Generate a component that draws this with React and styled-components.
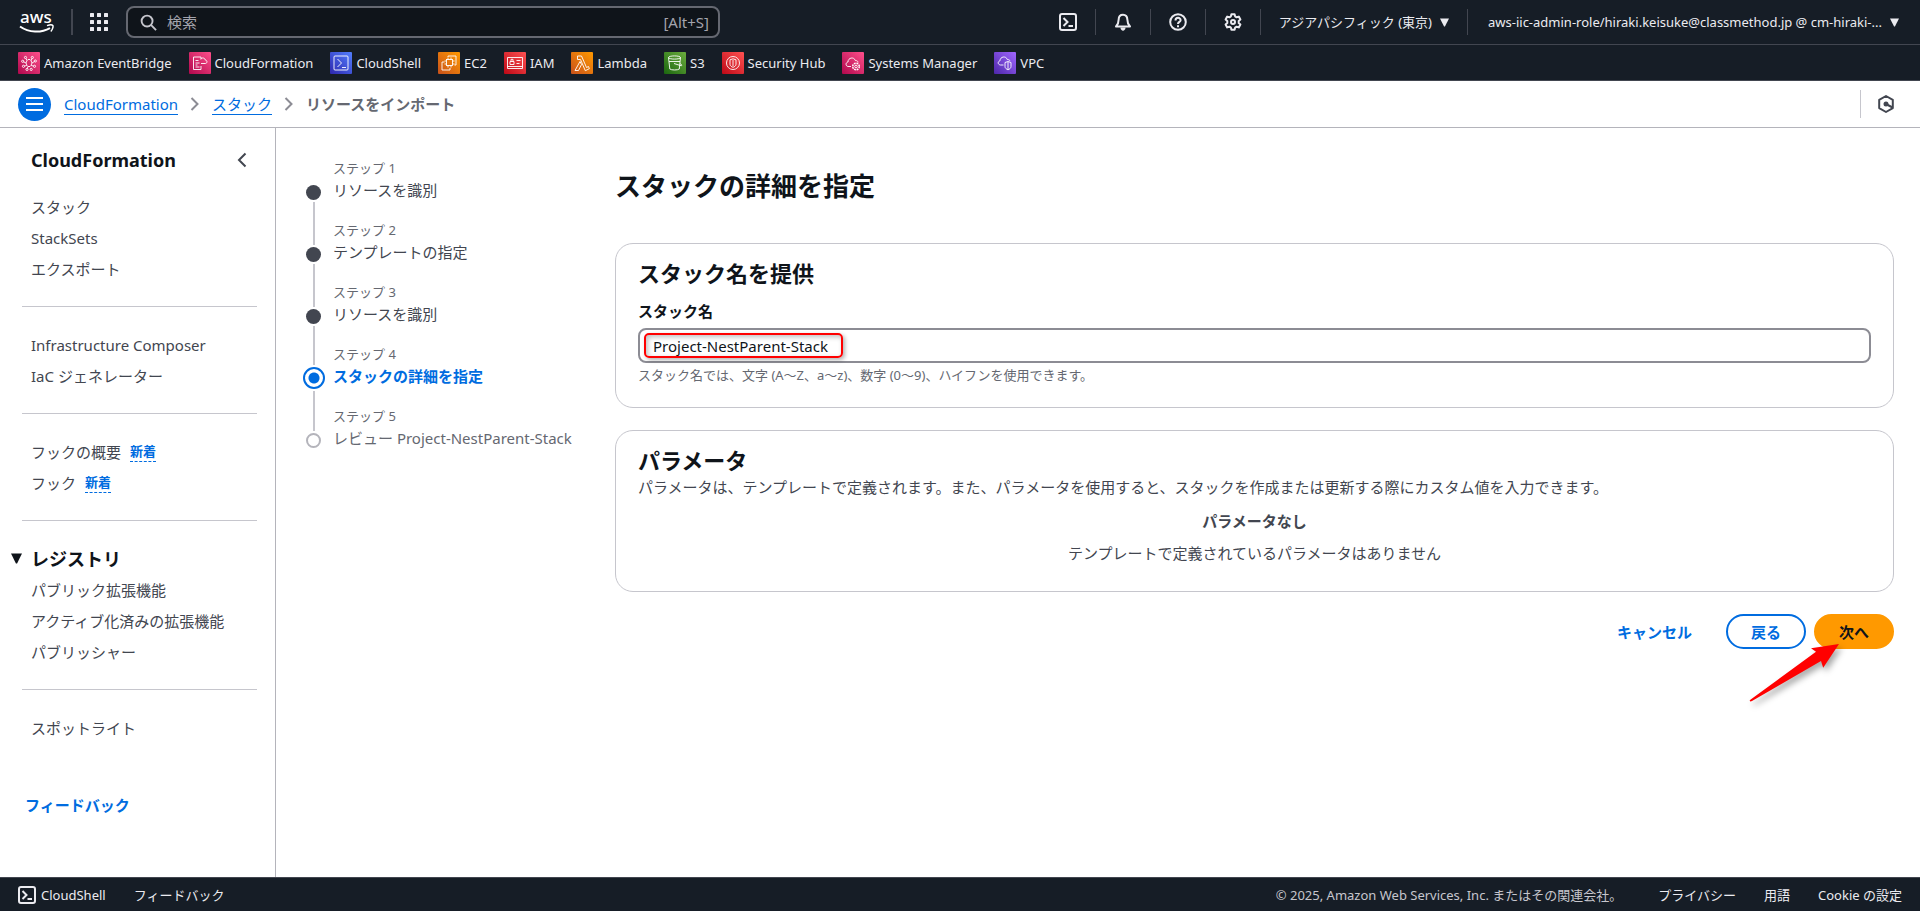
import React, { useState } from "react";
import styled, { createGlobalStyle, css } from "styled-components";

const color = {
  navy: "#161d26",
  navyDeep: "#0f141a",
  navyLine: "#424650",
  onNavy: "#ebebf0",
  ink: "#0f141a",
  text: "#424650",
  muted: "#656871",
  line: "#c6c6cd",
  blue: "#006ce0",
  orange: "#ff9900",
  mark: "#ff0000",
};

const GlobalStyle = createGlobalStyle`
  *, *::before, *::after { box-sizing: border-box; }
  body {
    margin: 0;
    background: #fff;
    color: ${color.text};
    font-family: "Noto Sans", "Noto Sans CJK JP", sans-serif;
    font-size: 15px;
    line-height: 24px;
  }
  h1, h2, h3, p, ul, ol { margin: 0; padding: 0; }
  ul, ol { list-style: none; }
  a { color: inherit; text-decoration: none; }
  button, input { font: inherit; color: inherit; }
  button { padding: 0; border: 0; background: none; cursor: pointer; }
  svg { display: block; flex: none; }
`;

const Page = styled.div`
  display: flex;
  flex-direction: column;
  min-height: 100vh;
`;

/* ---------- Global header ---------- */

const TopBar = styled.header`
  display: flex;
  align-items: center;
  height: 45px;
  background: ${color.navy};
  border-bottom: 1px solid ${color.navyLine};
  color: ${color.onNavy};
  font-size: 13px;
`;

const LogoLink = styled.a`
  display: flex;
  padding: 0 17px 0 18px;
`;

const BarDivider = styled.span`
  width: ${(p) => (p.$thick ? 2 : 1)}px;
  height: 26px;
  background: ${color.navyLine};
`;

const AppsButton = styled.button`
  display: flex;
  padding: 0 18px 0 17px;
`;

const SearchBox = styled.label`
  display: flex;
  align-items: center;
  gap: 10px;
  flex: 0 1 594px;
  height: 32px;
  padding: 0 9px 0 12px;
  background: ${color.navyDeep};
  border: 2px solid ${color.muted};
  border-radius: 8px;
  color: #a4a4ad;
  font-size: 15px;
`;

const SearchInput = styled.input`
  flex: 1;
  min-width: 0;
  padding: 0;
  border: 0;
  outline: 0;
  background: transparent;
  &::placeholder { color: #a4a4ad; opacity: 1; }
`;

const Utilities = styled.div`
  display: flex;
  align-items: center;
  margin-left: auto;
`;

const IconButton = styled.button`
  display: flex;
  justify-content: center;
  width: 54px;
`;

const MenuButton = styled.button`
  display: flex;
  align-items: center;
  gap: 8px;
  padding: 0 ${(p) => (p.$last ? 21 : 18)}px 0 ${(p) => (p.$last ? 20 : 18)}px;
  white-space: nowrap;
`;

const Favorites = styled.nav`
  height: 36px;
  background: ${color.navy};
  border-bottom: 1px solid ${color.navyLine};
  color: ${color.onNavy};
  font-size: 13px;
`;

const FavoriteList = styled.ul`
  display: flex;
  align-items: center;
  gap: 17px;
  height: 100%;
  padding: 0 18px;
`;

const FavoriteLink = styled.a`
  display: flex;
  align-items: center;
  gap: 4px;
  white-space: nowrap;
`;

const ServiceTile = styled.span`
  display: flex;
  width: 22px;
  height: 22px;
  border-radius: 1px;
  background: linear-gradient(45deg, ${(p) => p.$from}, ${(p) => p.$to});
`;

/* ---------- Breadcrumb bar ---------- */

const CrumbBar = styled.div`
  display: flex;
  align-items: center;
  height: 47px;
  padding: 0 25px 0 18px;
  border-bottom: 1px solid #b4b4bb;
`;

const RoundButton = styled.button`
  display: flex;
  align-items: center;
  justify-content: center;
  width: 33px;
  height: 33px;
  margin-right: 13px;
  border-radius: 50%;
  background: ${color.blue};
`;

const CrumbList = styled.ol`
  display: flex;
  align-items: center;
`;

const Crumb = styled.li`
  display: flex;
  align-items: center;
  font-weight: ${(p) => (p.$current ? 700 : 400)};
  color: ${(p) => (p.$current ? color.muted : color.blue)};
  svg { margin: 0 12px; }
`;

const CrumbLink = styled.a`
  line-height: 20px;
  border-bottom: 1px solid ${color.blue};
`;

const CrumbTools = styled.div`
  display: flex;
  align-items: center;
  margin-left: auto;
  height: 28px;
  padding-left: 16px;
  border-left: 1px solid ${color.line};
`;

/* ---------- Side navigation ---------- */

const Body = styled.div`
  display: flex;
  flex: 1;
`;

const SideNav = styled.nav`
  flex: none;
  width: 276px;
  padding-bottom: 40px;
  border-right: 1px solid #b4b4bb;
`;

const NavHeader = styled.div`
  display: flex;
  align-items: center;
  justify-content: space-between;
  height: 63px;
  padding: 0 28px 0 31px;
`;

const NavTitle = styled.h2`
  font-size: 18px;
  color: ${color.ink};
`;

const NavList = styled.ul`
  padding-left: 31px;
`;

const NavItem = styled.li`
  display: flex;
  align-items: center;
  gap: 9px;
  height: 31px;
`;

const NewBadge = styled.button`
  font-size: 13px;
  font-weight: 700;
  line-height: 20px;
  color: ${color.blue};
  border-bottom: 1px dashed ${color.blue};
`;

const NavDivider = styled.hr`
  height: 1px;
  margin: 22px 18px 22px 22px;
  border: 0;
  background: ${color.line};
`;

const SectionToggle = styled.button`
  display: flex;
  align-items: center;
  gap: 9px;
  height: 31px;
  padding-left: 11px;
  font-size: 18px;
  font-weight: 700;
  color: ${color.ink};
`;

const NavFeedback = styled.a`
  display: inline-block;
  margin: 50px 0 0 25px;
  font-weight: 700;
  color: ${color.blue};
`;

/* ---------- Wizard ---------- */

const Wizard = styled.main`
  display: grid;
  grid-template-columns: 273px minmax(0, 1fr);
  column-gap: 40px;
  align-content: start;
  flex: 1;
  padding: 30px 26px 40px;
`;

const Step = styled.li`
  display: flex;
  gap: 8px;
  height: 62px;
`;

const Rail = styled.span`
  display: flex;
  flex-direction: column;
  align-items: center;
  gap: 2px;
  width: 23px;
`;

const RailLine = styled.span`
  width: 2px;
  background: ${(p) => (p.$hidden ? "transparent" : color.line)};
  ${(p) => (p.$height ? css`height: ${p.$height}px;` : css`flex: 1;`)}
`;

const Dot = styled.span`
  width: 15px;
  height: 15px;
  border-radius: 50%;
  ${(p) => p.$state === "done" && css`background: ${color.text};`}
  ${(p) => p.$state === "todo" && css`border: 2px solid #b4b4bb;`}
  ${(p) =>
    p.$state === "current" &&
    css`
      width: 22px;
      height: 22px;
      border: 2px solid ${color.blue};
      background: radial-gradient(circle, ${color.blue} 5px, #fff 6px);
    `}
`;

const StepLabel = styled.div`
  font-size: 13px;
  line-height: 20px;
  color: ${color.muted};
`;

const StepTitle = styled.a`
  white-space: nowrap;
  font-weight: ${(p) => (p.$state === "current" ? 700 : 400)};
  color: ${(p) =>
    ({ done: color.text, current: color.blue, todo: color.muted })[p.$state]};
`;

const Title = styled.h1`
  padding: 10px 0 39px;
  font-size: 26px;
  line-height: 36px;
  color: ${color.ink};
`;

const Card = styled.section`
  margin-bottom: 22px;
  padding: 14px 22px 22px;
  border: 1px solid ${color.line};
  border-radius: 18px;
`;

const CardTitle = styled.h2`
  font-size: 22px;
  line-height: 30px;
  color: ${color.ink};
`;

const FieldLabel = styled.label`
  display: block;
  margin: 11px 0 5px;
  font-weight: 700;
  color: ${color.ink};
`;

const FieldBox = styled.div`
  position: relative;
`;

const TextInput = styled.input`
  display: block;
  width: 100%;
  height: 35px;
  padding: 0 13px;
  border: 2px solid #8c8c94;
  border-radius: 8px;
  outline: 0;
  background: #fff;
  color: ${color.ink};
`;

const FieldMark = styled.span`
  position: absolute;
  top: 5px;
  left: 6px;
  width: 199px;
  height: 25px;
  border: 2px solid ${color.mark};
  border-radius: 5px;
  box-shadow: 2px 2px 4px rgba(0, 0, 0, 0.3), inset 2px 2px 5px rgba(0, 0, 0, 0.25);
  pointer-events: none;
`;

const Hint = styled.p`
  padding: 2px 0 0;
  font-size: 13px;
  line-height: 20px;
  color: ${color.muted};
`;

const EmptyState = styled.div`
  display: flex;
  flex-direction: column;
  align-items: center;
  gap: 8px;
  padding: 10px 0 4px;
`;

const Actions = styled.div`
  position: relative;
  display: flex;
  justify-content: flex-end;
  gap: 8px;
`;

const Button = styled.button`
  height: 35px;
  padding: 0 ${(p) => (p.$variant === "link" ? 24 : 23)}px;
  border: 2px solid transparent;
  border-radius: 18px;
  font-weight: 700;
  color: ${color.blue};
  ${(p) => p.$variant === "normal" && css`border-color: ${color.blue};`}
  ${(p) =>
    p.$variant === "primary" &&
    css`
      background: ${color.orange};
      border-color: ${color.orange};
      color: ${color.ink};
    `}
`;

const Pointer = styled.svg`
  position: absolute;
  top: 29px;
  right: 54px;
  overflow: visible;
  pointer-events: none;
  filter: drop-shadow(3px 4px 3px rgba(0, 0, 0, 0.35));
`;

/* ---------- Footer ---------- */

const Footer = styled.footer`
  display: flex;
  align-items: center;
  gap: 28px;
  height: 34px;
  padding: 0 18px;
  background: ${color.navy};
  border-top: 1px solid ${color.navyLine};
  color: ${color.onNavy};
  font-size: 13px;
`;

const FooterButton = styled.button`
  display: flex;
  align-items: center;
  gap: 5px;
`;

const Copyright = styled.span`
  margin: 0 8px 0 auto;
  color: #c6c6cd;
`;

/* ---------- Icons ---------- */

const Stroke = ({ size = 18, width = 2, children, ...rest }) => (
  <svg
    width={size}
    height={size}
    viewBox="0 0 18 18"
    fill="none"
    stroke="currentColor"
    strokeWidth={width}
    strokeLinejoin="round"
    aria-hidden="true"
    {...rest}
  >
    {children}
  </svg>
);

const AwsLogo = () => (
  <svg width="36" height="36" viewBox="0 -6 36 36" role="img" aria-label="AWS">
    <text x="2" y="13" fill="#fff" fontFamily="Noto Sans" fontSize="17" fontWeight="500">
      aws
    </text>
    <path d="M2 16.500c9 6.400 21 6.600 30 1.600" fill="none" stroke="#fff" strokeWidth="2" />
    <path d="M29 15.600c2.400-.8 5.200-.9 5.800-.1.6.8-.2 4.300-2 6" fill="none" stroke="#fff" strokeWidth="1.500" />
  </svg>
);

const GridIcon = () => (
  <svg width="18" height="18" viewBox="0 0 18 18" fill={color.onNavy} aria-hidden="true">
    {[0, 7, 14].map((y) =>
      [0, 7, 14].map((x) => <rect key={`${x}-${y}`} x={x} y={y} width="4" height="4" rx="0.5" />)
    )}
  </svg>
);

const SearchIcon = () => (
  <Stroke size={17} color="#c6c6cd">
    <circle cx="7.500" cy="7.500" r="5.800" />
    <path d="M11.600 11.600 17 17" />
  </Stroke>
);

const TerminalIcon = () => (
  <Stroke>
    <rect x="1" y="1" width="16" height="16" rx="2" />
    <path d="m4.500 5 4 4-4 4M9.500 13H14" strokeLinejoin="miter" />
  </Stroke>
);

const BellIcon = () => (
  <Stroke>
    <path d="M9 1.700c-2.800 0-4.300 2-4.300 4.600 0 3.500-1 5.300-2.700 7.200h14c-1.700-1.900-2.700-3.700-2.700-7.200C13.300 3.700 11.800 1.700 9 1.700Z" />
    <path d="M6.500 14.500c0 4.200 5 4.200 5 0Z" fill="currentColor" stroke="none" />
  </Stroke>
);

const HelpIcon = () => (
  <Stroke>
    <circle cx="9" cy="9" r="7.800" />
    <path d="M6.500 7.400C6.500 4 11.600 4 11.600 7.200 11.600 9 9 8.900 9 11" />
    <path d="M9 12.200v2" />
  </Stroke>
);

const GearIcon = () => (
  <Stroke>
    <path d="m7.400 1.200h3.200l.5 2.200 1.500.9 2.200-.7 1.600 2.800-1.700 1.500v2.200l1.700 1.500-1.600 2.800-2.200-.7-1.500.9-.5 2.200H7.400l-.5-2.200-1.500-.9-2.200.7-1.600-2.800 1.700-1.500V7.900L1.600 6.400l1.600-2.800 2.200.7 1.500-.9Z" />
    <circle cx="9" cy="9" r="2" />
  </Stroke>
);

const HexIcon = () => (
  <Stroke color={color.text}>
    <path d="m9 1 6.800 3.900v8.200L9 17l-6.800-3.900V4.900Z" />
    <circle cx="9" cy="9" r="2.500" fill="currentColor" stroke="none" />
    <path d="m9 9 6.500 3.500" />
  </Stroke>
);

const Caret = ({ size = 9 }) => (
  <svg width={size} height={size} viewBox="0 0 10 10" fill="currentColor" aria-hidden="true">
    <path d="M0 .5h10L5.500 9.500h-1Z" />
  </svg>
);

const CrumbChevron = () => (
  <svg width="10" height="14" viewBox="0 0 10 14" fill="none" stroke="#8c8c94" strokeWidth="2" aria-hidden="true">
    <path d="m1.500 1 6 6-6 6" />
  </svg>
);

const glyphs = {
  events: (
    <>
      <path d="m9 8.500 1-1h2l1 1 1 2.500-1 2.500-1 1h-2l-1-1L8 11ZM9 8.500 8 6.500M13 8.500l1-2M14 11l2.500-1.500M8 11 5.500 9.800M8.800 13.500l-2.300.5M13.200 13.500l2.300.5M10 14.500l-.7 2" />
      <circle cx="7.500" cy="5.500" r="1.100" />
      <circle cx="14.300" cy="5.500" r="1.100" />
      <circle cx="17.300" cy="9" r="1.100" />
      <circle cx="4.700" cy="9.300" r="1.100" />
      <circle cx="5.500" cy="14.300" r="1.100" />
      <circle cx="16.500" cy="14.300" r="1.100" />
      <circle cx="9" cy="17.400" r="1.100" />
      <circle cx="13.200" cy="17.400" r="1.100" />
    </>
  ),
  template: (
    <>
      <path d="M12 7V5H4.500v12.500H12V14M6.500 8.500h3M6.500 11h4M6.500 13h2M6.500 15h4" />
      <path d="M12 11.500h4.500c2-.3 2-3.300-.3-3.500-.2-2.400-3.800-2.800-4.400-.5" />
    </>
  ),
  shell: (
    <>
      <rect x="4" y="4" width="14" height="14" rx="1" />
      <path d="m7.500 7 4 4-4 4M12 15.500h4" />
    </>
  ),
  chip: (
    <>
      <rect x="8.500" y="7.500" width="6" height="6" />
      <path d="M10 5.500v2M13 5.500v2M10 13.500v2M13 13.500v2M6.500 9h2M6.500 12h2M14.500 9h2M14.500 12h2" />
      <path d="M10 5V4h8v9h-1.500M6.500 10H4v8h8v-2" />
    </>
  ),
  card: (
    <>
      <path d="M3.500 5.500h15v11h-15ZM3.500 14.500h15M12.500 8.500h4M12.500 11.500h3" />
      <path d="M6 9.500h4v3H6ZM7 9.500V7.300h2v2.200" />
    </>
  ),
  lambda: (
    <path d="M6.500 4h4l5 11.500 2-1 .8 2.200-4 2L9.500 7.500H6.500ZM9 9.500l1.500 3-3 6H4Z" />
  ),
  bucket: (
    <>
      <ellipse cx="10.500" cy="5.500" rx="6" ry="1.600" />
      <path d="m4.500 5.500 1.300 11.500c1.500 1.300 8 1.300 9.500 0l1.200-11.500M5 9.500h11M10 11.500l7 2.200c1.500 0 1-1.200-1-2" />
    </>
  ),
  shield: (
    <>
      <circle cx="11" cy="11" r="6.500" />
      <path d="m11 6.800 3 1v4.500c0 1.500-1.500 2.500-3 3-1.500-.5-3-1.500-3-3V7.800ZM11 8v6" />
    </>
  ),
  cloudGear: (
    <>
      <path d="M9 14.500H6c-2.600-.5-2.600-4 0-4.500 0-4.500 6-5.500 7.300-1.500 2 0 2.700 1 2.700 2" />
      <circle cx="14" cy="14.500" r="1.300" />
      <circle cx="14" cy="14.500" r="3.300" strokeDasharray="1.800 0.800" strokeWidth="1.500" />
    </>
  ),
  cloudShield: (
    <>
      <path d="M9.500 13H6.500c-3-.5-3-3.500-.5-4.200C6 4.500 12 3.500 13.300 7.500c1.500 0 2.700.8 2.700 1.500" />
      <path d="m14 9.500 3 1v4c0 1.700-1.500 2.700-3 3.300-1.500-.6-3-1.600-3-3.300v-4ZM14 10v7" />
    </>
  ),
};

const Glyph = ({ name }) => (
  <svg width="22" height="22" viewBox="0 0 22 22" fill="none" stroke="#fff" strokeWidth="0.9" aria-hidden="true">
    {glyphs[name]}
  </svg>
);

/* ---------- Data ---------- */

const pink = ["#b0084d", "#ff4f8b"];
const orangeTile = ["#c8511b", "#ff9900"];
const red = ["#bd0816", "#ff5252"];

const favorites = [
  { name: "Amazon EventBridge", glyph: "events", tile: pink },
  { name: "CloudFormation", glyph: "template", tile: pink },
  { name: "CloudShell", glyph: "shell", tile: ["#2e27ad", "#527fff"] },
  { name: "EC2", glyph: "chip", tile: orangeTile },
  { name: "IAM", glyph: "card", tile: red },
  { name: "Lambda", glyph: "lambda", tile: orangeTile },
  { name: "S3", glyph: "bucket", tile: ["#1b660f", "#6cae3e"] },
  { name: "Security Hub", glyph: "shield", tile: red },
  { name: "Systems Manager", glyph: "cloudGear", tile: pink },
  { name: "VPC", glyph: "cloudShield", tile: ["#4d27aa", "#a166ff"] },
];

const navGroups = [
  [{ name: "スタック" }, { name: "StackSets" }, { name: "エクスポート" }],
  [{ name: "Infrastructure Composer" }, { name: "IaC ジェネレーター" }],
  [{ name: "フックの概要", isNew: true }, { name: "フック", isNew: true }],
];

const registry = [
  { name: "パブリック拡張機能" },
  { name: "アクティブ化済みの拡張機能" },
  { name: "パブリッシャー" },
];

const steps = [
  { title: "リソースを識別", state: "done" },
  { title: "テンプレートの指定", state: "done" },
  { title: "リソースを識別", state: "done" },
  { title: "スタックの詳細を指定", state: "current" },
  { title: "レビュー Project-NestParent-Stack", state: "todo" },
];

/* ---------- Composition ---------- */

const NavGroup = ({ items }) => (
  <NavList>
    {items.map((item) => (
      <NavItem key={item.name}>
        <a href="#">{item.name}</a>
        {item.isNew && <NewBadge type="button">新着</NewBadge>}
      </NavItem>
    ))}
  </NavList>
);

const Header = () => (
  <>
    <TopBar>
      <LogoLink href="#" aria-label="AWS">
        <AwsLogo />
      </LogoLink>
      <BarDivider $thick />
      <AppsButton type="button" aria-label="サービス">
        <GridIcon />
      </AppsButton>
      <SearchBox>
        <SearchIcon />
        <SearchInput type="search" placeholder="検索" aria-label="検索" />
        <span>[Alt+S]</span>
      </SearchBox>
      <Utilities>
        <IconButton type="button" aria-label="CloudShell">
          <TerminalIcon />
        </IconButton>
        <BarDivider />
        <IconButton type="button" aria-label="通知">
          <BellIcon />
        </IconButton>
        <BarDivider />
        <IconButton type="button" aria-label="ヘルプ">
          <HelpIcon />
        </IconButton>
        <BarDivider />
        <IconButton type="button" aria-label="設定">
          <GearIcon />
        </IconButton>
        <BarDivider />
        <MenuButton type="button">
          アジアパシフィック (東京)
          <Caret />
        </MenuButton>
        <BarDivider />
        <MenuButton type="button" $last>
          aws-iic-admin-role/hiraki.keisuke@classmethod.jp @ cm-hiraki-...
          <Caret />
        </MenuButton>
      </Utilities>
    </TopBar>
    <Favorites aria-label="お気に入り">
      <FavoriteList>
        {favorites.map((f) => (
          <li key={f.name}>
            <FavoriteLink href="#">
              <ServiceTile $from={f.tile[0]} $to={f.tile[1]}>
                <Glyph name={f.glyph} />
              </ServiceTile>
              {f.name}
            </FavoriteLink>
          </li>
        ))}
      </FavoriteList>
    </Favorites>
  </>
);

const Breadcrumbs = () => (
  <CrumbBar>
    <RoundButton type="button" aria-label="メニュー">
      <svg width="17" height="14" viewBox="0 0 17 14" stroke="#fff" strokeWidth="2" aria-hidden="true">
        <path d="M0 1h17M0 7h17M0 13h17" />
      </svg>
    </RoundButton>
    <CrumbList>
      <Crumb>
        <CrumbLink href="#">CloudFormation</CrumbLink>
        <CrumbChevron />
      </Crumb>
      <Crumb>
        <CrumbLink href="#">スタック</CrumbLink>
        <CrumbChevron />
      </Crumb>
      <Crumb $current aria-current="page">
        リソースをインポート
      </Crumb>
    </CrumbList>
    <CrumbTools>
      <button type="button" aria-label="ツール">
        <HexIcon />
      </button>
    </CrumbTools>
  </CrumbBar>
);

const Sidebar = () => {
  const [open, setOpen] = useState(true);
  return (
    <SideNav aria-label="CloudFormation">
      <NavHeader>
        <NavTitle>CloudFormation</NavTitle>
        <button type="button" aria-label="閉じる">
          <svg width="10" height="16" viewBox="0 0 10 16" fill="none" stroke={color.text} strokeWidth="2" aria-hidden="true">
            <path d="M8.500 1.500 2 8l6.500 6.500" />
          </svg>
        </button>
      </NavHeader>
      {navGroups.map((items) => (
        <React.Fragment key={items[0].name}>
          <NavGroup items={items} />
          <NavDivider />
        </React.Fragment>
      ))}
      <SectionToggle type="button" aria-expanded={open} onClick={() => setOpen(!open)}>
        <Caret size={11} />
        レジストリ
      </SectionToggle>
      {open && <NavGroup items={registry} />}
      <NavDivider />
      <NavGroup items={[{ name: "スポットライト" }]} />
      <NavFeedback href="#">フィードバック</NavFeedback>
    </SideNav>
  );
};

const StepList = () => (
  <ol>
    {steps.map((s, i) => (
      <Step key={i} aria-current={s.state === "current" ? "step" : undefined}>
        <Rail>
          <RailLine $height={s.state === "current" ? 21 : 25} $hidden={i === 0} />
          <Dot $state={s.state} />
          <RailLine $hidden={i === steps.length - 1} />
        </Rail>
        <div>
          <StepLabel>ステップ {i + 1}</StepLabel>
          <StepTitle href="#" $state={s.state}>
            {s.title}
          </StepTitle>
        </div>
      </Step>
    ))}
  </ol>
);

const StackForm = () => {
  const [name, setName] = useState("Project-NestParent-Stack");
  return (
    <div>
      <Title>スタックの詳細を指定</Title>
      <Card>
        <CardTitle>スタック名を提供</CardTitle>
        <FieldLabel htmlFor="stack-name">スタック名</FieldLabel>
        <FieldBox>
          <TextInput
            id="stack-name"
            type="text"
            aria-describedby="stack-name-hint"
            value={name}
            onChange={(e) => setName(e.target.value)}
          />
          <FieldMark />
        </FieldBox>
        <Hint id="stack-name-hint">
          スタック名では、文字 (A～Z、a～z)、数字 (0～9)、ハイフンを使用できます。
        </Hint>
      </Card>
      <Card>
        <CardTitle>パラメータ</CardTitle>
        <p>
          パラメータは、テンプレートで定義されます。また、パラメータを使用すると、スタックを作成または更新する際にカスタム値を入力できます。
        </p>
        <EmptyState>
          <strong>パラメータなし</strong>
          <p>テンプレートで定義されているパラメータはありません</p>
        </EmptyState>
      </Card>
      <Actions>
        <Button type="button" $variant="link">
          キャンセル
        </Button>
        <Button type="button" $variant="normal">
          戻る
        </Button>
        <Button type="button" $variant="primary">
          次へ
        </Button>
        <Pointer width="94" height="60" viewBox="0 0 94 60" aria-hidden="true">
          <path
            d="M93 1 65 5.300 70 8.700 4 57c-.8 1.200.6 2 2 1L75 18l2.200 6.700Z"
            fill={color.mark}
          />
        </Pointer>
      </Actions>
    </div>
  );
};

export default function App() {
  return (
    <Page>
      <GlobalStyle />
      <Header />
      <Breadcrumbs />
      <Body>
        <Sidebar />
        <Wizard>
          <StepList />
          <StackForm />
        </Wizard>
      </Body>
      <Footer>
        <FooterButton type="button">
          <TerminalIcon />
          CloudShell
        </FooterButton>
        <a href="#">フィードバック</a>
        <Copyright>© 2025, Amazon Web Services, Inc. またはその関連会社。</Copyright>
        <a href="#">プライバシー</a>
        <a href="#">用語</a>
        <a href="#">Cookie の設定</a>
      </Footer>
    </Page>
  );
}
